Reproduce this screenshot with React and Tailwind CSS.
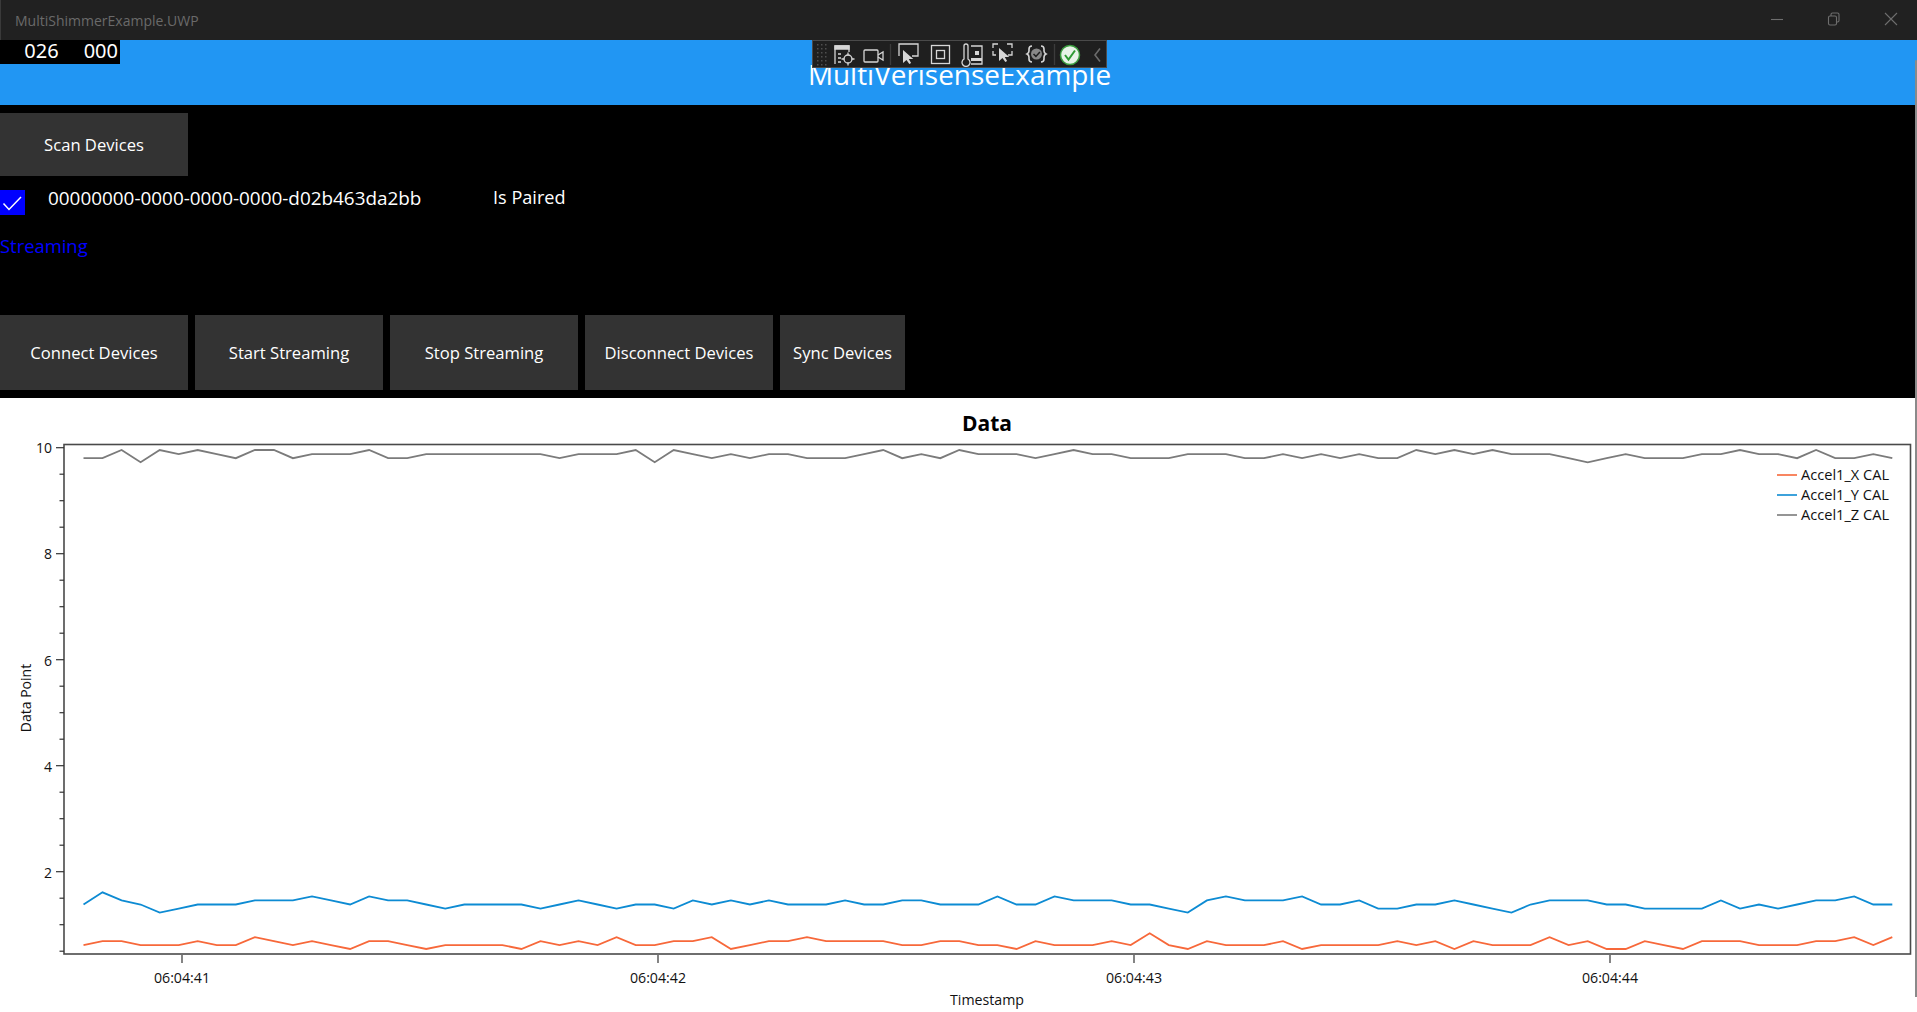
import { Fragment } from 'react';

// levels read off the reference, one value per sample (0 = highest on screen)
const X_LEVELS = [3,2,2,3,3,3,2,3,3,1,2,3,2,3,4,2,2,3,4,3,3,3,3,4,2,3,2,3,1,3,3,2,2,1,4,3,2,2,1,2,2,2,2,3,3,2,2,3,3,4,2,3,3,3,2,3,0,3,4,2,3,3,3,2,4,3,3,3,3,2,3,2,4,2,3,3,3,1,3,2,4,4,2,3,4,2,2,2,3,3,3,2,2,1,3,1];
const Y_LEVELS = [3,0,2,3,5,4,3,3,3,2,2,2,1,2,3,1,2,2,3,4,3,3,3,3,4,3,2,3,4,3,3,4,2,3,2,3,2,3,3,3,2,3,3,2,2,3,3,3,1,3,3,1,2,2,2,3,3,4,5,2,1,2,2,2,1,3,3,2,4,4,3,3,2,3,4,5,3,2,2,2,3,3,4,4,4,4,2,4,3,4,3,2,2,1,3,3];
const Z_LEVELS = [2,2,0,3,0,1,0,1,2,0,0,2,1,1,1,0,2,2,1,1,1,1,1,1,1,2,1,1,1,0,3,0,1,2,1,2,1,1,2,2,2,1,0,2,1,2,0,1,1,1,2,1,0,1,1,2,2,2,1,1,1,2,2,1,2,1,2,1,2,2,0,1,0,1,0,1,1,1,2,3,2,1,2,2,2,1,1,0,1,1,2,0,2,2,1,2];

const CHART_TOP = 398;
const toPoints = (levels, base, step) =>
  levels
    .map((l, i) => `${(83.5 + i * 19.04).toFixed(1)},${(base + l * step - CHART_TOP).toFixed(1)}`)
    .join(' ');

const LINES = [
  { name: 'Accel1_X CAL', color: '#f7683a', points: toPoints(X_LEVELS, 933.3, 3.93) },
  { name: 'Accel1_Y CAL', color: '#0d8bd3', points: toPoints(Y_LEVELS, 892.3, 4.07) },
  { name: 'Accel1_Z CAL', color: '#7b7b7b', points: toPoints(Z_LEVELS, 450, 4.1) },
];

const Y_LABELS = [
  { v: '10', y: 448 },
  { v: '8', y: 554 },
  { v: '6', y: 661 },
  { v: '4', y: 767 },
  { v: '2', y: 873 },
];
const Y_TICKS = Array.from({ length: 20 }, (_, i) => 447.7 + i * 26.5);
const X_TICKS = [
  { x: 182, t: '06:04:41' },
  { x: 658, t: '06:04:42' },
  { x: 1134, t: '06:04:43' },
  { x: 1610, t: '06:04:44' },
];

function ActionButton({ label, width }) {
  return (
    <button className={`h-full bg-[#333333] text-white text-[16.6px] pt-[2px] ${width}`}>{label}</button>
  );
}

function Chart() {
  return (
    <svg width="1917" height="614" className="block" style={{ fontFamily: '"Open Sans", sans-serif' }}>
      <text x="987" y="33" textAnchor="middle" fontSize="21" fontWeight="700" fill="#000">Data</text>
      <rect x="64" y="46.5" width="1846.5" height="509.5" fill="none" stroke="#4a4a4a" strokeWidth="1.6" />
      {Y_TICKS.map((y, i) => (
        <line key={i} x1={i % 4 === 0 ? 56 : 59.5} x2="64" y1={y - CHART_TOP} y2={y - CHART_TOP} stroke="#333" strokeWidth="1.2" />
      ))}
      {Y_LABELS.map((l) => (
        <text key={l.v} x="52" y={l.y - CHART_TOP + 5} textAnchor="end" fontSize="14" fill="#111">{l.v}</text>
      ))}
      {X_TICKS.map((t) => (
        <Fragment key={t.t}>
          <line x1={t.x} x2={t.x} y1="557" y2="565" stroke="#333" strokeWidth="1.2" />
          <text x={t.x} y="585" textAnchor="middle" fontSize="14.2" fill="#111">{t.t}</text>
        </Fragment>
      ))}
      <text x="987" y="607" textAnchor="middle" fontSize="14.2" fill="#111">Timestamp</text>
      <text transform="translate(31 300) rotate(-90)" textAnchor="middle" fontSize="14" fill="#111">Data Point</text>
      {LINES.map((s) => (
        <polyline key={s.name} points={s.points} fill="none" stroke={s.color} strokeWidth="1.8" strokeLinejoin="miter" />
      ))}
      {LINES.map((s, i) => (
        <Fragment key={s.name}>
          <line x1="1777" x2="1797" y1={77 + i * 20} y2={77 + i * 20} stroke={s.color} strokeWidth="1.6" />
          <text x="1801" y={82 + i * 20} fontSize="14.6" fill="#111">{s.name}</text>
        </Fragment>
      ))}
    </svg>
  );
}

function DebugToolbar() {
  const stroke = '#d6d6d6';
  return (
    <div className="absolute left-[812px] top-0 h-[28px] w-[295px] bg-[#1f1f1f] border border-[#4a4a4a]">
      <svg width="293" height="26" viewBox="0 0 293 26" fill="none" stroke={stroke} strokeWidth="1.3">
        {/* gripper */}
        <g fill="#4f4f4f" stroke="none">
          {[3, 7, 11, 15, 19, 23].map((y) => (
            <Fragment key={y}>
              <rect x="4" y={y} width="1.5" height="1.5" />
              <rect x="8" y={y} width="1.5" height="1.5" />
              <rect x="12" y={y} width="1.5" height="1.5" />
            </Fragment>
          ))}
        </g>
        {/* live visual tree */}
        <path d="M22 23V5h14v6" />
        <path d="M22 5h14v3H22z" fill={stroke} />
        <path d="M25 13h3M25 17h3M25 21h3" />
        <circle cx="35" cy="18" r="4" />
        <path d="M35 11.5v3M35 21.5v3M28.5 18h3M38.5 18h3" />
        {/* camera */}
        <rect x="51" y="9" width="14" height="12" rx="1" />
        <path d="M65 14l5-3v8l-5-3" />
        <line x1="77.5" y1="3" x2="77.5" y2="24" stroke="#3c3c3c" />
        {/* select element */}
        <path d="M86 15V3h19v12h-6" />
        <path d="M90 9v13l3.500-3 2.800 4 1.800-1-2.300-4h4.500z" fill={stroke} stroke="none" />
        {/* layout adorner */}
        <rect x="118.500" y="4.500" width="18" height="18" />
        <rect x="123.500" y="9.500" width="8" height="8" />
        {/* thermometer with chart */}
        <path d="M151 5a2 2 0 0 1 4 0v13a4 4 0 1 1-4 0z" />
        <path d="M158 5h11v18h-11" />
        <rect x="162" y="10" width="4" height="4" fill={stroke} stroke="none" />
        <rect x="158" y="17" width="11" height="3" fill={stroke} stroke="none" />
        {/* selection with cursor */}
        <path d="M180 7V3h5M194 3h5v4M180 10v4h3M195 14h4v-4" />
        <path d="M186 7v13l3.500-3 2.800 4 1.800-1-2.300-4h4.500z" fill={stroke} stroke="none" />
        {/* binding check */}
        <path d="M219 5q-3 0-3 3v2q0 2-2 3 2 1 2 3v2q0 3 3 3M228 5q3 0 3 3v2q0 2 2 3-2 1-2 3v2q0 3-3 3" strokeWidth="1.6" />
        <circle cx="223.500" cy="13" r="5.500" fill="#888" stroke="none" />
        <path d="M220.500 13l2.400 2.400 4-4.500" stroke="#1f1f1f" strokeWidth="1.500" />
        <line x1="241.500" y1="3" x2="241.500" y2="24" stroke="#3c3c3c" />
        {/* green status */}
        <circle cx="257" cy="14" r="9.500" fill="#e8f3e8" stroke="#3a9c3e" strokeWidth="1.500" />
        <path d="M252 14l3.500 4.500 6.500-9" stroke="#2e9a34" strokeWidth="2" />
        {/* collapse */}
        <path d="M287 7.500l-5 6.500 5 6.500" stroke="#6b6b6b" strokeWidth="1.600" />
      </svg>
    </div>
  );
}

function WindowControls() {
  return (
    <div className="flex items-center h-full">
      <svg width="146" height="40" viewBox="0 0 146 40" fill="none" stroke="#6e6e6e" strokeWidth="1.100">
        <path d="M0 19.500h12" />
        <rect x="57.500" y="16" width="8" height="9" rx="1.500" />
        <path d="M60 16v-1.500a1.500 1.500 0 0 1 1.500-1.500h5a1.500 1.500 0 0 1 1.500 1.500v6a1.500 1.500 0 0 1-1.500 1.500H65.500" />
        <path d="M114 13l12 12M126 13l-12 12" />
      </svg>
    </div>
  );
}

export default function App() {
  return (
    <div className="relative flex flex-col w-[1917px] h-[1012px] overflow-hidden bg-black font-['Open_Sans',sans-serif]">
      {/* Title bar */}
      <div className="flex items-center justify-between h-10 shrink-0 bg-[#212121] pl-[14px] border-l border-[#3a3a3a]">
        <span className="text-[14px] text-[#6a6a6a]">MultiShimmerExample.UWP</span>
        <WindowControls />
      </div>

      {/* Blue header */}
      <div className="relative flex items-center justify-center h-[65px] shrink-0 bg-[#2196f3] pt-[5px]">
        <span className="text-[27.9px] text-white translate-x-[1px]">MultiVerisenseExample</span>
        <div className="absolute left-0 top-0 flex justify-end gap-[25px] w-[120px] h-6 bg-black pr-[2px] text-[20px] leading-[22px] text-white font-['Noto_Sans',sans-serif]">
          <span>026</span>
          <span>000</span>
        </div>
        <DebugToolbar />
      </div>

      {/* Device panel */}
      <div className="flex flex-col shrink-0 h-[293px] pt-2 bg-black">
        <button className="w-[188px] h-[63px] bg-[#333333] text-white text-[16.6px] pt-[2px]">Scan Devices</button>
        <div className="flex items-center h-[25px] mt-[14px]">
          <div className="w-[25px] h-[25px] bg-[#0000ff]">
            <svg width="25" height="25" viewBox="0 0 25 25" fill="none" stroke="#fff" strokeWidth="1.5">
              <path d="M3.5 13.5l5.5 6L21 7" />
            </svg>
          </div>
          <span className="ml-[23px] w-[445px] text-[18.9px] text-white -mt-[9px]">00000000-0000-0000-0000-d02b463da2bb</span>
          <span className="text-[18.1px] text-white -mt-[9px]">Is Paired</span>
        </div>
        <span className="mt-[17px] text-[18.4px] leading-7 text-[#0000ff]">Streaming</span>
        <div className="flex gap-[7px] h-[75px] mt-[55px]">
          <ActionButton label="Connect Devices" width="w-[188px]" />
          <ActionButton label="Start Streaming" width="w-[188px]" />
          <ActionButton label="Stop Streaming" width="w-[188px]" />
          <ActionButton label="Disconnect Devices" width="w-[188px]" />
          <ActionButton label="Sync Devices" width="w-[125px]" />
        </div>
      </div>

      {/* Chart */}
      <div className="flex-1 bg-white">
        <Chart />
      </div>

      {/* Page scrollbar sliver */}
      <div className="absolute right-0 top-[60px] w-[2px] h-[937px] bg-[#8a8a8a] rounded-t" />
    </div>
  );
}
